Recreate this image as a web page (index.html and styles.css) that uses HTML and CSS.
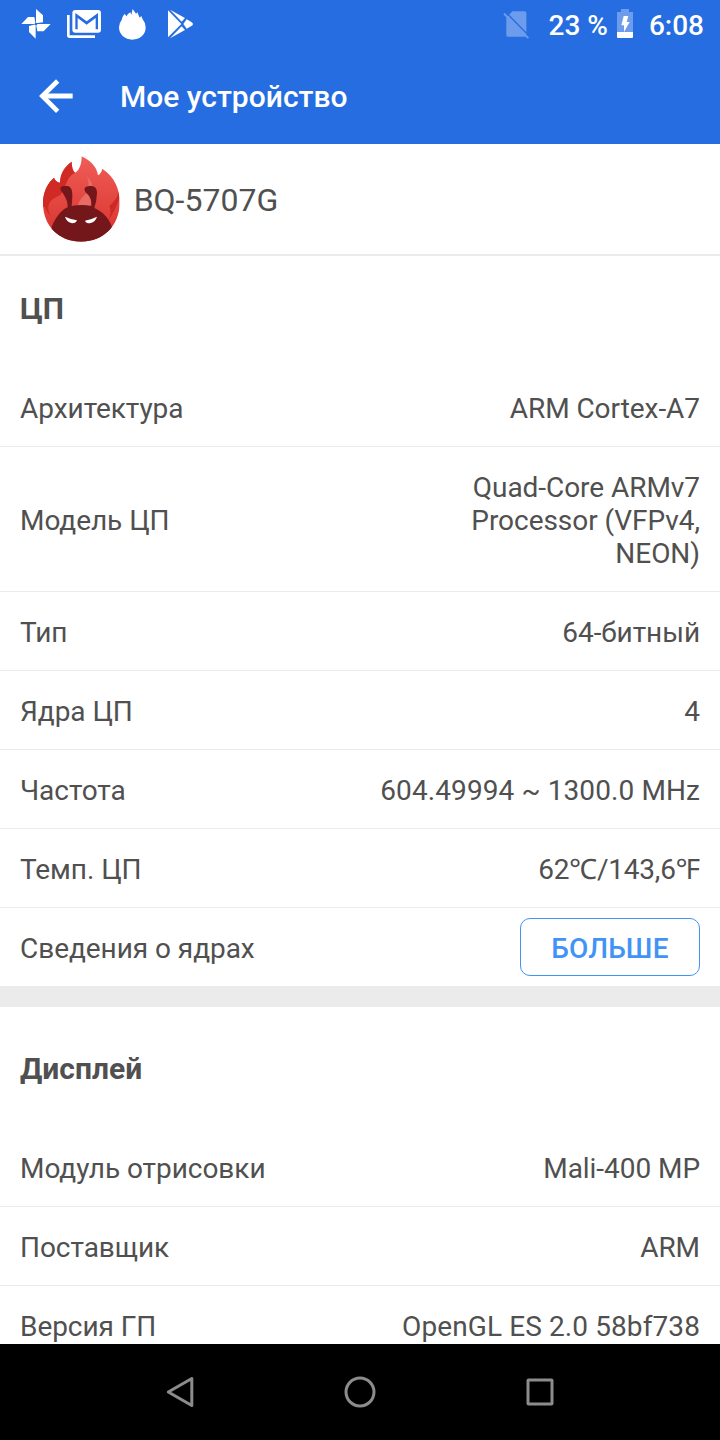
FILE: index.html
```html
<!DOCTYPE html>
<html lang="ru">
<head>
<meta charset="utf-8">
<title>Мое устройство</title>
<link rel="stylesheet" href="styles.css">
</head>
<body>
<div class="screen">
  <div class="status">
    <svg class="notifications" viewBox="0 0 630 144" fill="#fff">
      <path d="M108 27L129 46V67L108 70ZM152 72L131 94H112L108 72ZM107 116L87 96V78L107 73ZM64 72L84 51H103L107 72Z"/>
      <circle cx="108" cy="72" r="4" fill="#256de0"/>
      <path d="M201 45h8v61h76v8h-76q-8 0-8-8z"/>
      <path fill-rule="evenodd" d="M226 30h68q9 0 9 9v50q0 9-9 9h-68q-9 0-9-9V39q0-9 9-9zm0 9v49h7V54l27 20 27-20v34h7V39l-34 25z"/>
      <path d="M365 60Q367 49 374 41L379 49Q384 40 391 37L394 44L398 27L408 41L412 37L419 53L424 48L428 58Q437 69 437 82C437 105 419 119 397 119S357 104 357 82Q357 69 365 60Z"/>
      <path d="M504 31l40 41-40 40zM510 29l45 25-10 11zM510 115l45-25-10-11zM550 72l10-14 13 7q12 7 0 14l-13 7z"/>
    </svg>
    <div class="system">
      <svg class="sim" viewBox="40 30 82 90">
        <path d="M69 33h36q6 0 6 6v66q0 6-6 6H56q-6 0-6-6V52z" fill="#6c9ceb"/>
        <path d="M47 35l74 75" stroke="#256de0" stroke-width="4"/>
        <path d="M43 40l74 75" stroke="#6c9ceb" stroke-width="6"/>
      </svg>
      <span class="percent">23 %</span>
      <svg class="battery" viewBox="0 0 48 87">
        <path d="M0 9h12V0h24v9h12v60H0z" fill="#6c9ceb"/>
        <path d="M0 69h48v15q0 3-3 3H3q-3 0-3-3zM20 21h14l-5 18h9L21 69V49h-8z" fill="#fff"/>
      </svg>
      <span class="clock">6:08</span>
    </div>
  </div>
  <header class="bar">
    <svg class="back" viewBox="0 0 102 102" fill="none" stroke="#fff"><path d="M101 51H10" stroke-width="15"/><path d="M56 6L10 51l46 46" stroke-width="14"/></svg>
    <h1>Мое устройство</h1>
  </header>
  <main>
    <div class="device">
      <svg class="logo" viewBox="36 30 236 264">
        <defs>
          <linearGradient id="flame" x1="0" y1="0" x2="0" y2="1"><stop offset="0" stop-color="#f05e57"/><stop offset="1" stop-color="#d8302c"/></linearGradient>
          <clipPath id="disc"><path d="M39 175C39 140 53 115 72 98Q77 111 90 113C91 85 103 66 125 50Q125 74 135 83C150 75 155 55 155 34C181 47 200 64 204 91Q215 84 217 71C253 96 269 130 269 172C269 242 221 290 153 290S39 241 39 175Z"/></clipPath>
        </defs>
        <g clip-path="url(#disc)">
          <path d="M30 30H275V295H30Z" fill="url(#flame)"/>
          <path d="M30 30H126L135 83Q116 92 106 122L92 150Q62 160 52 185Q46 198 62 214L44 185H30Z" fill="#d02a25"/>
          <path d="M39 165Q42 195 62 212Q43 180 74 150L90 125L60 105Z" fill="#d02a25"/>
          <path d="M267 138Q262 165 238 182Q246 200 236 224Q256 198 268 160Z" fill="#cd2925"/>
          <path d="M143 182Q150 160 167 147Q182 128 171 94Q188 112 188 128L182 182Z" fill="#e96b66"/>
          <path d="M65 246C80 208 102 191 113 187C114 168 104 152 94 139C86 123 96 122 112 123C132 125 127 158 125 183Q154 177 184 183C185 164 180 153 168 143C158 130 166 123 182 123C195 123 201 130 201 144Q200 170 193 189C218 200 235 218 245 243V295H65Z" fill="#73171b"/>
        </g>
        <path d="M105 215Q125 224 141 226Q138 235 127 235Q110 232 105 215ZM201 215Q183 224 165 227Q168 235 179 235Q196 232 201 215Z" fill="#fff"/>
      </svg>
      <span class="device-name">BQ-5707G</span>
    </div>
    <section class="group cpu">
      <h2>ЦП</h2>
      <div class="row"><span>Архитектура</span><span class="value">ARM Cortex-A7</span></div>
      <div class="row"><span>Модель ЦП</span><span class="value">Quad-Core ARMv7<br>Processor (VFPv4,<br>NEON)</span></div>
      <div class="row"><span>Тип</span><span class="value">64-битный</span></div>
      <div class="row"><span>Ядра ЦП</span><span class="value">4</span></div>
      <div class="row"><span>Частота</span><span class="value wide">604.49994 ~ 1300.0 MHz</span></div>
      <div class="row"><span>Темп. ЦП</span><span class="value temp">62℃/143,6℉</span></div>
      <div class="row last"><span>Сведения о ядрах</span><button class="more">БОЛЬШЕ</button></div>
    </section>
    <section class="group display">
      <h2>Дисплей</h2>
      <div class="row"><span>Модуль отрисовки</span><span class="value">Mali-400 MP</span></div>
      <div class="row"><span>Поставщик</span><span class="value">ARM</span></div>
      <div class="row"><span>Версия ГП</span><span class="value wide">OpenGL ES 2.0 58bf738</span></div>
    </section>
  </main>
  <nav class="nav">
    <svg viewBox="0 0 36 36"><path d="M29.8 4.5v27L6.3 18z"/></svg>
    <svg viewBox="0 0 36 36"><circle cx="18" cy="18" r="14"/></svg>
    <svg viewBox="0 0 36 36"><rect x="6" y="6" width="24" height="24" rx=".5"/></svg>
  </nav>
</div>
</body>
</html>
```
FILE: styles.css
```css
* { box-sizing: border-box; }
body { margin: 0; font-family: Roboto, "Noto Sans", sans-serif; color: #505050; background: #fff; }
.screen { width: 720px; height: 1440px; display: flex; flex-direction: column; overflow: hidden; }
.status { height: 48px; flex: none; display: flex; justify-content: space-between; background: #256de0; color: #fff; font-size: 28px; font-weight: 500; }
.notifications { width: 210px; height: 48px; }
.system { display: flex; align-items: flex-start; padding-right: 16px; line-height: 33px; padding-top: 9px; }
.sim { width: 27px; height: 30px; margin: 1px 18px 0 0; }
.battery { width: 16px; height: 29px; margin: 0 16px 0 9px; }
.bar { height: 96px; flex: none; display: flex; align-items: center; padding-left: 39px; background: #256de0; color: #fff; }
.back { width: 34px; height: 34px; margin-right: 47px; }
h1 { margin: 2px 0 0; font-size: 30px; font-weight: 500; line-height: 36px; }
main { flex: 1; min-height: 0; overflow: hidden; }
.device { height: 112px; display: flex; align-items: center; padding-left: 42px; border-bottom: 2px solid #ebebeb; font-size: 32px; }
.logo { width: 78.67px; height: 88px; margin-right: 13px; }
.device-name { padding-top: 1px; }
h2 { margin: 0; height: 112px; padding: 35px 20px 0; font-size: 30px; font-weight: 700; line-height: 36px; }
.row { display: flex; justify-content: space-between; align-items: center; padding: 24px 20px 21px; border-bottom: 1px solid #ebebeb; font-size: 28px; line-height: 33px; letter-spacing: -0.05px; }
.cpu h2 { height: 111px; }
.cpu h2 + .row { padding-top: 25px; }
.value { text-align: right; }
.wide { letter-spacing: 0.1px; }
.temp { letter-spacing: -0.2px; }
.last { height: 78px; border-bottom: 0; padding-top: 10px; padding-bottom: 8px; }
.more { width: 180px; height: 58px; padding: 2px 0 0; margin-bottom: 2px; border: 1px solid #4193f5; border-radius: 10px; background: #fff; color: #4193f5; font: 500 28px/33px Roboto, sans-serif; letter-spacing: 0.2px; }
.display { border-top: 21px solid #ebebeb; padding-top: 9px; }
.nav { height: 96px; flex: none; display: flex; justify-content: center; align-items: center; gap: 144px; background: #000; }
.nav svg { width: 36px; height: 36px; fill: none; stroke: #8c8c8c; stroke-width: 3; stroke-linejoin: round; }
```
